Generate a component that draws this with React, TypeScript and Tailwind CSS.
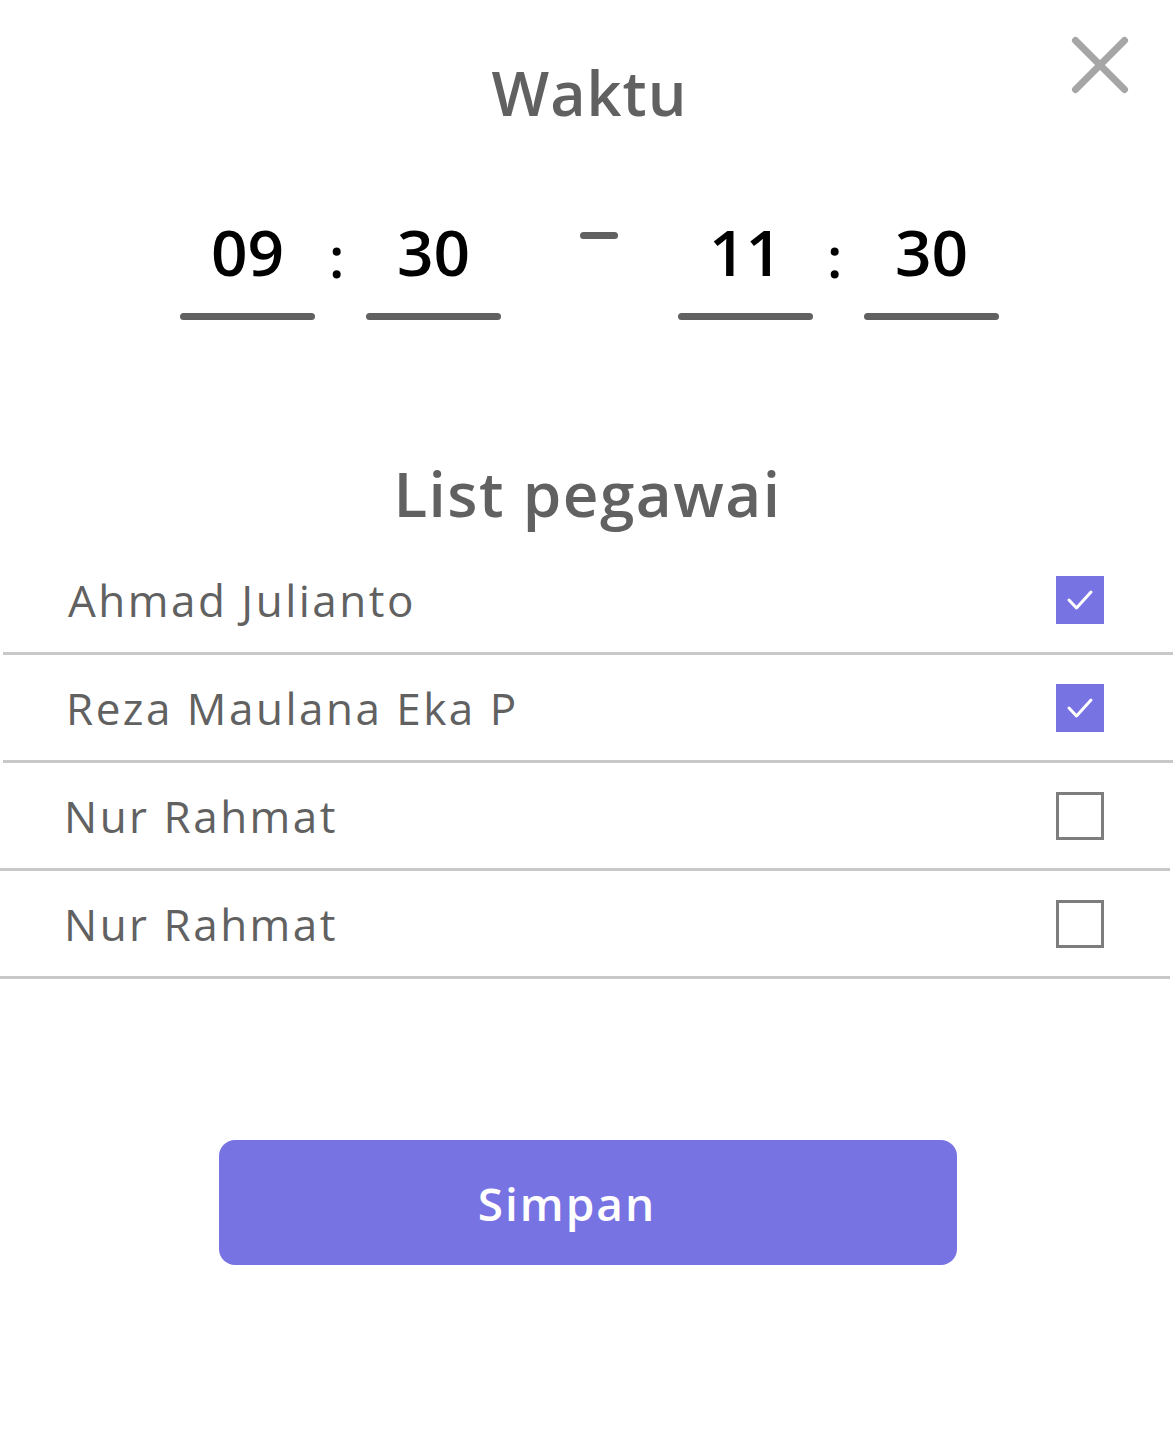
import React from 'react';

const PEGAWAI = [
  { id: 1, name: 'Ahmad Julianto', checked: true, pad: 'pl-[68px]', line: 'ml-[3px]' },
  { id: 2, name: 'Reza Maulana Eka P', checked: true, pad: 'pl-[66px]', line: 'ml-[3px]' },
  { id: 3, name: 'Nur Rahmat', checked: false, pad: 'pl-[64px]', line: 'mr-[3px]' },
  { id: 4, name: 'Nur Rahmat', checked: false, pad: 'pl-[64px]', line: 'mr-[3px]' },
];

const TimeField: React.FC<{ value: string }> = ({ value }) => (
  <div className="flex flex-col items-center w-[135px]">
    <span className="h-[80px] flex items-end text-[64px] font-semibold leading-none text-black">{value}</span>
    <div className="mt-[29px] h-[7px] w-full rounded-full bg-[#616161]"></div>
  </div>
);

const Colon: React.FC = () => (
  <div className="w-[51px] flex justify-start pl-[14px] h-[80px] items-end">
    <span className="text-[56px] font-semibold leading-none text-black">:</span>
  </div>
);

const App: React.FC = () => {
  return (
    <div
      className="relative w-[1173px] h-[1443px] bg-white overflow-hidden"
      style={{ fontFamily: '"Open Sans", sans-serif' }}
    >
      {/* tombol tutup */}
      <button className="absolute top-[36px] right-[44px] size-[58px] flex items-center justify-center">
        <svg width="58" height="58" viewBox="0 0 58 58">
          <path d="M4.5 4.5 L53.5 53.5 M53.5 4.5 L4.5 53.5" stroke="#a6a6a6" strokeWidth="7" strokeLinecap="round" />
        </svg>
      </button>

      {/* Judul */}
      <div className="pt-[62px] h-[134px] flex justify-center">
        <h1 className="text-[61px] font-semibold leading-none tracking-[1px] text-[#616161] ml-[6px]">Waktu</h1>
      </div>

      {/* Jam */}
      <div className="flex items-start pl-[180px] pt-[70px]">
        <TimeField value="09" />
        <Colon />
        <TimeField value="30" />
        <div className="w-[177px] flex justify-center pt-[28px]">
          <div className="ml-[18px] w-[38px] h-[7px] rounded-full bg-[#616161]"></div>
        </div>
        <TimeField value="11" />
        <Colon />
        <TimeField value="30" />
      </div>

      {/* List pegawai */}
      <div className="mt-[142px] flex justify-center">
        <h2 className="text-[62px] font-semibold leading-none tracking-[1.5px] text-[#616161] ml-[2px]">List pegawai</h2>
      </div>

      <div className="mt-[23px] flex flex-col">
        {PEGAWAI.map((p) => (
          <div key={p.id} className="flex flex-col">
            <div className={`h-[105px] flex items-center justify-between ${p.pad} pr-[69px]`}>
              <span className="text-[44px] leading-none tracking-[2.5px] text-[#616161]">{p.name}</span>
              {p.checked ? (
                <div className="size-[48px] bg-[#7873e3] flex items-center justify-center">
                  <svg width="34" height="34" viewBox="0 0 34 34">
                    <path d="M6 17 L13.5 25 L28 9" fill="none" stroke="white" strokeWidth="3" strokeLinecap="round" strokeLinejoin="round" />
                  </svg>
                </div>
              ) : (
                <div className="size-[48px] border-[3px] border-[#7d7d7d] bg-white"></div>
              )}
            </div>
            <div className={`h-[3px] bg-[#c8c8c8] ${p.line}`}></div>
          </div>
        ))}
      </div>

      {/* Tombol simpan */}
      <div className="mt-[161px] flex justify-center">
        <button className="ml-[3px] w-[738px] h-[125px] rounded-[16px] bg-[#7873e3] flex items-center justify-center pr-[42px]">
          <span className="text-[46px] font-semibold leading-none tracking-[2px] text-white">Simpan</span>
        </button>
      </div>
    </div>
  );
};

export default App;
